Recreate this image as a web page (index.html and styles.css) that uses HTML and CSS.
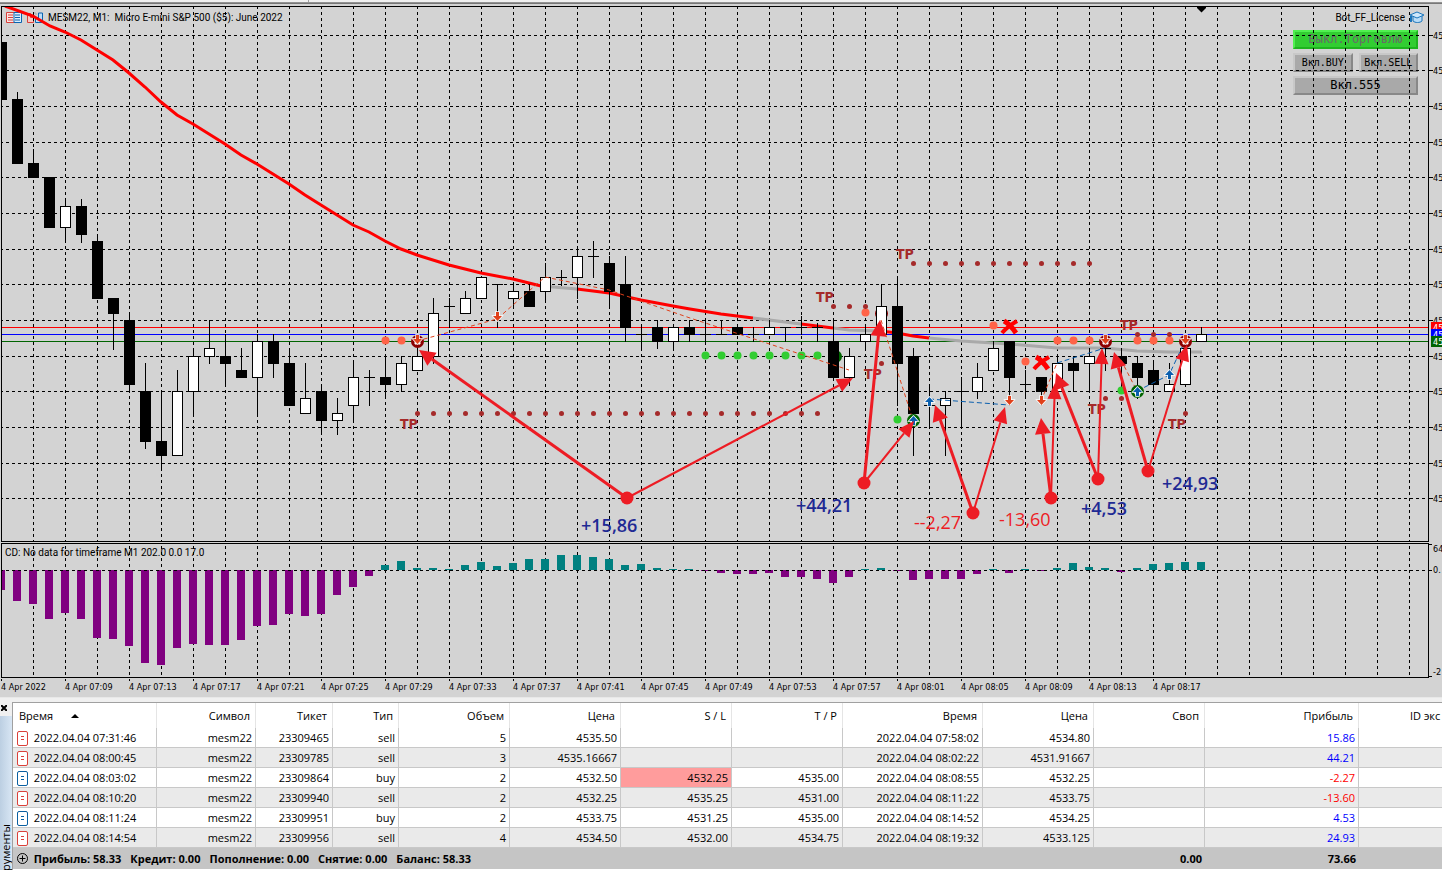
FILE: index.html
```
<!DOCTYPE html>
<html lang="ru">
<head>
  <meta charset="UTF-8">
  <title>MESM22, M1</title>
  <meta name="viewport" content="width=device-width, initial-scale=1">
  <link rel="stylesheet" href="styles.css">
</head>
<body>
  <div class="top-strip"></div>

  <main class="chart">
    <section class="plot" id="price-plot">
      <div class="chart-title">
        <svg width="16" height="12" viewBox="0 0 16 12">
          <path d="M8 .5H.5v10H8" fill="#fde4e2" stroke="#d9403a"/>
          <path d="M8 .5h7.5v10H8z" fill="#dbeefc" stroke="#0a63b0"/>
          <path d="M2 3h5M2 5.500h5M2 8h5" stroke="#d9403a"/>
          <path d="M9 3h5M9 5.500h5M9 8h5" stroke="#0a63b0"/>
        </svg>
        <svg width="16" height="12" viewBox="0 0 16 12">
          <path d="M.5 1.500h3v4h3v5h-6z" fill="#f7c9c5" stroke="#d9403a"/>
          <path d="M15.500 1h-4v5h-3v4.500h7z" fill="#b9dcf7" stroke="#0a63b0"/>
          <path d="M6 1h3v2" fill="none" stroke="#aaa"/>
        </svg>
        <span>MESM22, M1:&nbsp; Micro E-mini S&amp;P 500 ($5): June 2022</span>
      </div>
      <div class="expert">
        <span>Bot_FF_License</span>
        <svg width="16" height="13" viewBox="0 0 16 13">
          <path d="M4 5v5c2 2 7 2 9 0V5" fill="#b9dcf7" stroke="#1b75bb"/>
          <path d="M1 4l7-3 7 3-7 3z" fill="#cfe8fb" stroke="#1b75bb"/>
          <path d="M2 5v6" stroke="#1b75bb" stroke-width="2"/>
        </svg>
      </div>
      <div class="bot-panel">
        <button class="bot-btn on">Выкл.Торговлю</button>
        <button class="bot-btn small">Вкл.BUY</button>
        <button class="bot-btn small">Вкл.SELL</button>
        <button class="bot-btn wide">Вкл.555</button>
      </div>
      <svg class="canvas" id="price-canvas"></svg>
    </section>
    <svg class="scale" id="price-scale"></svg>

    <section class="plot" id="cd-plot">
      <div class="cd-title">CD: No data for timeframe M1 202.0 0.0 17.0</div>
      <svg class="canvas" id="cd-canvas"></svg>
    </section>
    <svg class="scale" id="cd-scale"></svg>

    <div class="time-axis" id="time-axis"></div>
  </main>

  <section class="toolbox">
    <aside class="side">
      <button class="close" aria-label="Закрыть"><svg width="6" height="6" viewBox="0 0 6 6"><path d="M0 0l6 6M6 0L0 6" stroke="#000" stroke-width="2"/></svg></button>
      <div class="side-tab"><span>Инструменты</span></div>
    </aside>
    <div class="table-wrap">
      <table>
        <colgroup>
          <col class="c-time"><col class="c-symbol"><col class="c-ticket"><col class="c-type">
          <col class="c-num"><col class="c-num"><col class="c-num"><col class="c-num">
          <col class="c-close"><col class="c-num"><col class="c-num"><col class="c-profit"><col>
        </colgroup>
        <thead>
          <tr>
            <th class="first">Время <i class="sort"></i></th><th>Символ</th><th>Тикет</th><th>Тип</th>
            <th>Объем</th><th>Цена</th><th>S / L</th><th>T / P</th><th>Время</th><th>Цена</th>
            <th>Своп</th><th>Прибыль</th><th class="last">ID экс</th>
          </tr>
        </thead>
        <tbody id="deals"></tbody>
        <tfoot>
          <tr>
            <td colspan="10" class="first">
              <svg width="11" height="11" viewBox="0 0 11 11"><circle cx="5.500" cy="5.500" r="5" fill="none" stroke="#000"/><path d="M5.500 2.500v6M2.500 5.500h6" stroke="#000"/></svg>
              <span>Прибыль: 58.33</span><span>Кредит: 0.00</span><span>Пополнение: 0.00</span><span>Снятие: 0.00</span><span>Баланс: 58.33</span>
            </td>
            <td>0.00</td><td>73.66</td><td></td>
          </tr>
        </tfoot>
      </table>
    </div>
  </section>

  <script src="chart.js"></script>
</body>
</html>
```
FILE: styles.css
```
* {
  box-sizing: border-box;
}

body {
  margin: 0;
  height: 100vh;
  display: flex;
  flex-direction: column;
  overflow: hidden;
  background: #f0f0f0;
  color: #000;
  font-family: "Open Sans", "Noto Sans", sans-serif;
  font-size: 11px;
}

.top-strip {
  flex: none;
  height: 6px;
  background: linear-gradient(#f0f0f0 2px, #a0a0a0 2px, #696969 4px, #d3d3d3 4px);
}

.top-strip::before {
  content: "";
  display: block;
  width: 308px;
  height: 2px;
  border-right: 1px solid #a0a0a0;
}

/* chart window */
.chart {
  flex: none;
  display: grid;
  grid-template-columns: 1fr 13px;
  grid-template-rows: 536px 135px 18px;
  row-gap: 1px;
  padding-left: 1px;
  background: #d3d3d3;
  border-bottom: 1px solid #e8e8e8;
  font-family: "DejaVu Sans Condensed", "DejaVu Sans", sans-serif;
  font-size: 9px;
}

.plot {
  position: relative;
  min-width: 0;
  overflow: hidden;
  border: 1px solid #000;
}

.canvas {
  position: absolute;
  top: 0;
  left: 0;
  width: 100%;
  height: 100%;
  pointer-events: none;
}

.scale {
  width: 100%;
  height: 100%;
}

.chart-title,
.expert,
.cd-title {
  font-family: Roboto, sans-serif;
  font-size: 10px;
}

.chart-title {
  display: flex;
  align-items: center;
  gap: 5px;
  height: 21px;
  padding-left: 4px;
  white-space: nowrap;
}

.expert {
  position: absolute;
  top: 0;
  right: 3px;
  display: flex;
  align-items: center;
  gap: 4px;
  height: 21px;
}

.cd-title {
  padding-left: 3px;
  line-height: 18px;
}

.bot-panel {
  position: absolute;
  top: 23px;
  right: 10px;
  width: 125px;
  display: grid;
  grid-template-columns: 1fr 1fr;
  gap: 4px 6px;
}

.bot-btn {
  height: 19px;
  padding: 0;
  border: 2px solid;
  border-color: #c8c8c8 #888 #888 #c8c8c8;
  background: #a9a9a9;
  color: #000;
  font: 12px/15px "DejaVu Sans Mono", monospace;
}

.bot-btn.on {
  grid-column: span 2;
  background: #32cd32;
  border-color: #50f050 #1eb41e #1eb41e #50f050;
  color: #696969;
}

.bot-btn.wide {
  grid-column: span 2;
}

.bot-btn.small {
  font-size: 10px;
}

.time-axis {
  grid-column: span 2;
  display: flex;
  overflow: hidden;
  line-height: 13px;
}

.time-axis span {
  flex: none;
  width: 64px;
  white-space: nowrap;
}

.time-axis span::before {
  content: "";
  display: block;
  width: 1px;
  height: 2px;
  background: #000;
}

.tp {
  font: bold 14px "DejaVu Sans Condensed", sans-serif;
  fill: #a52a2a;
}

.result {
  font: 600 18px "Open Sans", sans-serif;
  fill: #1f2a94;
}

.result.loss {
  fill: #ed1c24;
  font-weight: 500;
}

/* history table */
.toolbox {
  flex: 1;
  min-height: 0;
  display: flex;
  padding-top: 4px;
}

.side {
  flex: none;
  width: 12px;
  display: flex;
  flex-direction: column;
}

.close {
  display: flex;
  height: 14px;
  padding: 3px 0 0 1px;
  border: 0;
  background: none;
}

.side-tab {
  flex: 1;
  min-height: 0;
  overflow: hidden;
  padding-top: 108px;
  background: linear-gradient(90deg, #bccfe2, #d8e6f4);
}

.side-tab span {
  display: block;
  writing-mode: vertical-rl;
  transform: rotate(180deg);
  line-height: 12px;
}

.table-wrap {
  flex: 1;
  min-width: 0;
  overflow: hidden;
  background: #fff;
  border-top: 1px solid #a0a0a0;
  border-left: 1px solid #a0a0a0;
}

table {
  width: 100%;
  table-layout: fixed;
  border-collapse: separate;
  border-spacing: 0;
}

.c-time { width: 144px; }
.c-symbol { width: 99px; }
.c-ticket { width: 77px; }
.c-type { width: 66px; }
.c-num { width: 111px; }
.c-close { width: 140px; }
.c-profit { width: 154px; }

th, td {
  padding: 0 3px 0 0;
  text-align: right;
  white-space: nowrap;
  border-right: 1px solid #c8c8c8;
}

th {
  height: 25px;
  padding-right: 5px;
  font-weight: 400;
  border-color: #e5e5e5;
}

th.first {
  padding-left: 6px;
  text-align: left;
}

th.last {
  padding: 0 0 0 51px;
  text-align: left;
  border-right: 0;
}

.sort {
  display: inline-block;
  margin-left: 15px;
  border: 4px solid transparent;
  border-top: 0;
  border-bottom: 4px solid #000;
  vertical-align: 2px;
}

td {
  height: 20px;
  line-height: 18px;
  border-bottom: 1px solid #c8c8c8;
}

td:last-child {
  border-right: 0;
}

tbody tr:nth-child(even) {
  background: #eaeaea;
}

.first {
  text-align: left;
}

td .doc {
  margin: 0 3px 0 4px;
  vertical-align: middle;
}

td.hit {
  background: #ff9c9c;
}

td.profit {
  color: #00f;
}

td.loss {
  color: #f00;
}

tfoot td {
  height: 21px;
  border: 0;
  background: #c5c5c5;
  font-weight: 700;
}

tfoot svg {
  margin: 0 3px 0 4px;
  vertical-align: -1px;
}

tfoot span {
  margin-right: 9px;
}
```
FILE: chart.js
```
const SVG = 'http://www.w3.org/2000/svg';
const STEP = 16;
const barX = i => 1 + i * STEP;

// [high, top, bottom, low, type]: b - bear, w - bull, d - doji
const candles = [
  [42, 42, 99, 99, 'b'], [92, 99, 163, 163, 'b'], [149, 163, 177, 177, 'b'], [177, 177, 227, 227, 'b'],
  [199, 206, 227, 242, 'w'], [199, 206, 234, 242, 'b'], [234, 241, 298, 298, 'b'], [298, 298, 313, 349, 'b'],
  [312, 320, 384, 391, 'b'], [363, 391, 441, 448, 'b'], [391, 441, 455, 470, 'b'], [370, 391, 455, 455, 'w'],
  [348, 356, 391, 416, 'w'], [320, 348, 356, 363, 'w'], [334, 356, 363, 386, 'b'], [348, 370, 377, 377, 'b'],
  [334, 341, 377, 416, 'w'], [334, 341, 363, 377, 'b'], [348, 363, 405, 405, 'b'], [363, 398, 413, 413, 'w'],
  [384, 391, 420, 434, 'b'], [398, 413, 420, 434, 'w'], [360, 377, 405, 420, 'w'], [370, 377, 377, 405, 'd'],
  [354, 377, 384, 398, 'b'], [356, 363, 384, 391, 'w'], [341, 356, 370, 370, 'w'], [298, 313, 356, 363, 'w'],
  [298, 306, 306, 327, 'd'], [291, 298, 313, 313, 'w'], [277, 277, 298, 298, 'w'], [284, 284, 284, 327, 'd'],
  [284, 291, 298, 308, 'w'], [284, 291, 306, 306, 'b'], [263, 277, 291, 299, 'w'], [270, 277, 277, 285, 'd'],
  [247, 256, 277, 298, 'w'], [241, 256, 256, 277, 'd'], [256, 263, 291, 308, 'b'], [256, 284, 327, 341, 'b'],
  [324, 334, 334, 350, 'd'], [320, 327, 341, 348, 'b'], [327, 327, 341, 350, 'w'], [320, 327, 334, 341, 'b'],
  [320, 334, 334, 341, 'd'], [320, 334, 334, 334, 'd'], [327, 327, 334, 334, 'b'], [327, 334, 334, 341, 'd'],
  [320, 327, 334, 334, 'w'], [327, 327, 327, 341, 'd'], [316, 327, 327, 334, 'd'], [323, 327, 327, 341, 'd'],
  [320, 341, 377, 377, 'b'], [348, 356, 377, 385, 'w'], [327, 334, 341, 349, 'w'], [284, 306, 334, 334, 'w'],
  [277, 306, 363, 405, 'b'], [348, 356, 413, 455, 'b'], [384, 405, 405, 427, 'd'], [391, 398, 405, 455, 'w'],
  [377, 391, 391, 427, 'd'], [363, 377, 391, 398, 'w'], [341, 348, 370, 370, 'w'], [341, 341, 377, 405, 'b'],
  [370, 384, 384, 398, 'd'], [377, 377, 391, 405, 'b'], [356, 363, 391, 391, 'w'], [356, 363, 370, 391, 'b'],
  [348, 356, 363, 391, 'w'], [341, 348, 348, 370, 'd'], [348, 356, 363, 384, 'b'], [356, 363, 377, 398, 'b'],
  [363, 370, 384, 391, 'b'], [363, 384, 391, 391, 'w'], [341, 348, 384, 384, 'w'], [327, 334, 341, 341, 'w']
];

// cumulative delta: height below (-) or above (+) the zero line
const delta = [
  -20, -31, -34, -49, -43, -49, -68, -69, -76, -93, -95, -78, -74, -75, -75, -70, -56, -55, -44, -46,
  -44, -25, -17, -6, 5, 9, 2, 2, 1, 5, 8, 4, 7, 11, 11, 15, 15, 13, 11, 5, 6, 2, 1, 1, -1, -3, -4, -4,
  -3, -7, -7, -9, -13, -7, 1, 2, -1, -10, -9, -9, -9, -4, 1, -3, 1, -1, 2, 7, 3, 2, -2, 2, 6, 7, 8, 8
];

const gridRows = [35, 70, 106, 142, 177, 213, 249, 284, 320, 356, 391, 427, 463, 498];

function add(parent, tag, attrs, text) {
  const el = document.createElementNS(SVG, tag);
  for (const key in attrs) el.setAttribute(key, attrs[key]);
  if (text) el.textContent = text;
  parent.appendChild(el);
  return el;
}

function rect(g, x, y, width, height, fill) {
  return add(g, 'rect', { x, y, width, height, fill });
}

function path(g, d, stroke, width, dash) {
  return add(g, 'path', { d, stroke, fill: 'none', 'stroke-width': width, 'stroke-dasharray': dash || 'none' });
}

function verticals(g, width, top, bottom) {
  for (let x = 33.5; x < width; x += 32) path(g, `M${x} ${top}V${bottom}`, '#000', 1, '3 3');
}

function drawCandle(g, c, i) {
  const x = barX(i);
  const [high, top, bottom, low, type] = c;
  rect(g, x, high, 1, low - high + 1, '#000');
  rect(g, x - 5, top, 11, bottom - top + 1, '#000');
  if (type === 'w') rect(g, x - 4, top + 1, 9, bottom - top - 1, '#fff');
}

function drawDots(g, from, to, y, r, fill) {
  for (let x = from; x <= to; x += STEP) add(g, 'circle', { cx: x + 0.5, cy: y + 0.5, r, fill });
}

function drawRing(g, x, y, color) {
  add(g, 'circle', { cx: x + 0.5, cy: y + 0.5, r: 5, fill: '#fff', stroke: color, 'stroke-width': 3 });
  path(g, `M${x + 0.5} ${y - 5}v11M${x - 4} ${y + 0.5}h9`, color, 2);
}

function drawDeal(g, x, y, dir) {
  const s = dir === 'up' ? -1 : 1;
  const color = dir === 'up' ? '#0a5fae' : '#e0401a';
  add(g, 'path', {
    d: `M${x + 0.5} ${y + 5 * s}l-4.500 ${-5 * s}h3v${-4 * s}h3v${4 * s}h3z`,
    fill: color, stroke: '#fff', 'stroke-width': 1.5, 'paint-order': 'stroke'
  });
}

function drawCross(g, x, y) {
  path(g, `M${x - 6} ${y - 6}q6 3 12 12`, '#f00', 5);
  path(g, `M${x - 8} ${y + 6}q5 -6 15 -12`, '#f00', 4);
}

function drawArrow(g, x1, y1, x2, y2, width) {
  const len = Math.hypot(x2 - x1, y2 - y1);
  const ux = (x2 - x1) / len;
  const uy = (y2 - y1) / len;
  const bx = x2 - ux * 16;
  const by = y2 - uy * 16;
  const half = width === 3 ? 8 : 7;
  path(g, `M${x1} ${y1}L${bx} ${by}`, '#ed1c24', width);
  add(g, 'path', {
    d: `M${x2} ${y2}L${bx - uy * half} ${by + ux * half}L${bx + uy * half} ${by - ux * half}z`,
    fill: '#ed1c24'
  });
}

function drawPrice() {
  const svg = document.getElementById('price-canvas');
  const width = svg.clientWidth + 2;
  const g = add(svg, 'g', { transform: 'translate(-2 -7)' });

  verticals(g, width, 6, 541);
  gridRows.forEach(y => path(g, `M0 ${y + 0.5}H${width}`, '#000', 1, '3 3'));
  path(g, `M0 327.500H${width}`, '#f00', 1);
  path(g, `M0 334.500H${width}`, '#00f', 1);
  path(g, `M0 341.500H${width}`, '#006400', 1);

  // markers hidden behind the candles
  drawRing(g, 881, 313, '#8b0000');
  drawRing(g, 835, 356, '#006400');
  drawDots(g, 705, 817, 355, 4, '#32cd32');
  drawDots(g, 865, 865, 312, 4, '#ff6347');

  // moving average
  const red = '#f00', gray = '#a9a9a9';
  path(g, 'M5 6L33 16L50 26L65 32L81 40L97 50L113 60L129 73L145 87L161 102L177 115L193 124L209 134L225 144L241 155L257 164L273 174L289 184L305 195L321 205L337 215L353 225L369 232L385 241L401 249L417 255L449 265L481 273L513 279L541 286', red, 3);
  path(g, 'M541 286L577 289', gray, 3);
  path(g, 'M577 289L609 293L641 300L673 306L690 309L721 314L753 318', red, 3);
  path(g, 'M753 318L801 324', gray, 3);
  path(g, 'M801 324L833 328', red, 3);
  path(g, 'M833 328L849 330L881 331', gray, 3);
  path(g, 'M881 331L897 333L913 336L929 338', red, 3);
  path(g, 'M929 338L961 341L1009 344L1057 348L1105 348L1137 351L1169 352L1202 352', gray, 3);

  candles.forEach((c, i) => drawCandle(g, c, i));

  // trade lines
  path(g, 'M417 341L497 319L545 277L609 290L690 318L849 370M881 320L913 420M1041 401L1057 363M1121 360L1137 391', '#e0401a', 1, '4 3');
  path(g, 'M929 399L1009 405M1057 363L1105 348M1137 391L1169 375L1185 341', '#0a5fae', 1, '5 3');

  drawDots(g, 385, 401, 340, 4, '#ff6347');
  drawDots(g, 993, 993, 325, 4, '#ff6347');
  drawDots(g, 1025, 1025, 361, 4, '#ff6347');
  drawDots(g, 1057, 1089, 340, 4, '#ff6347');
  drawDots(g, 1137, 1169, 340, 4, '#ff6347');
  drawDots(g, 897, 897, 419, 4, '#32cd32');
  drawDots(g, 1121, 1121, 390, 4, '#32cd32');

  drawDots(g, 417, 817, 413, 2.5, '#a52a2a');
  drawDots(g, 833, 865, 306, 2.5, '#a52a2a');
  drawDots(g, 881, 881, 363, 2.5, '#a52a2a');
  drawDots(g, 913, 1089, 263, 2.5, '#a52a2a');
  drawDots(g, 1105, 1121, 398, 2.5, '#a52a2a');
  drawDots(g, 1137, 1169, 334, 2.5, '#a52a2a');
  drawDots(g, 1185, 1185, 413, 2.5, '#a52a2a');

  [[400, 429], [816, 302], [896, 259], [864, 379], [1088, 414], [1120, 330], [1168, 429]]
    .forEach(([x, y]) => add(g, 'text', { x, y, class: 'tp' }, 'TP'));

  [[417, 341], [1105, 341], [1185, 341]].forEach(([x, y]) => {
    drawRing(g, x, y, '#8b0000');
    drawDeal(g, x, y - 2, 'down');
  });
  [[913, 420], [1137, 391]].forEach(([x, y]) => {
    drawRing(g, x, y, '#006400');
    drawDeal(g, x, y + 1, 'up');
  });
  drawDeal(g, 497, 316, 'down');
  drawDeal(g, 1009, 400, 'down');
  drawDeal(g, 1041, 400, 'down');
  drawDeal(g, 929, 402, 'up');
  drawDeal(g, 1169, 375, 'up');

  drawCross(g, 1010, 327);
  drawCross(g, 1042, 363);

  // deal callouts: pivot, thick arrow to the entry, thin arrow to the exit
  [
    [627, 498, 419, 350, 853, 378],
    [864, 483, 880, 320, 914, 421],
    [973, 513, 935, 405, 1005, 407],
    [1051, 498, 1041, 418, 1055, 383],
    [1098, 479, 1056, 373, 1102, 348],
    [1148, 471, 1114, 352, 1187, 345]
  ].forEach(([x, y, ax, ay, bx, by]) => {
    drawArrow(g, x, y, bx, by, 2);
    drawArrow(g, x, y, ax, ay, 3);
    add(g, 'circle', { cx: x, cy: y, r: 6.5, fill: '#ed1c24' });
  });

  [
    [581, 532, '+15,86'], [796, 512, '+44,21'], [914, 529, '--2,27'],
    [999, 526, '-13,60'], [1081, 515, '+4,53'], [1162, 490, '+24,93']
  ].forEach(([x, y, t]) => add(g, 'text', { x, y, class: t[0] === '-' ? 'result loss' : 'result' }, t));

  add(g, 'path', { d: 'M1197 7h9v1l-4.500 4.500l-4.500 -4.500z', fill: '#000' });
}

function drawPriceScale() {
  const g = add(document.getElementById('price-scale'), 'g', { transform: 'translate(0 -6)' });
  gridRows.forEach(y => {
    rect(g, 0, y, 4, 1, '#000');
    add(g, 'text', { x: 4, y: y + 4 }, '45');
  });
  [[322, '#f00'], [329, '#00f'], [336, '#006400']].forEach(([y, fill]) => {
    rect(g, 2, y, 12, 11, fill);
    add(g, 'text', { x: 4, y: y + 9, fill: '#fff' }, '45');
  });
}

function drawDelta() {
  const svg = document.getElementById('cd-canvas');
  const width = svg.clientWidth + 2;
  const g = add(svg, 'g', { transform: 'translate(-2 -544)' });
  verticals(g, width, 546, 677);
  delta.forEach((v, i) => {
    const x = barX(i) - 4;
    if (v < 0) rect(g, x, 570, 8, -v, '#800080');
    else rect(g, x, 570 - v, 8, v, '#008080');
  });
  path(g, `M0 570.500H${width}`, '#000', 1, '3 3');

  const s = add(document.getElementById('cd-scale'), 'g', { transform: 'translate(0 -543)' });
  [[544, 552, '64'], [570, 573, '0.'], [676, 675, '-2']].forEach(([tick, y, t]) => {
    rect(s, 0, tick, 3, 1, '#000');
    add(s, 'text', { x: 4, y }, t);
  });
}

function drawTimeAxis() {
  const axis = document.getElementById('time-axis');
  let html = '<span>4 Apr 2022</span>';
  for (let m = 7 * 60 + 9; m <= 8 * 60 + 17; m += 4) {
    const mm = String(m % 60).padStart(2, '0');
    html += `<span>4 Apr 0${Math.floor(m / 60)}:${mm}</span>`;
  }
  axis.innerHTML = html;
}

const deals = [
  ['07:31:46', '23309465', 'sell', 5, '4535.50', '', '', '07:58:02', '4534.80', '15.86'],
  ['08:00:45', '23309785', 'sell', 3, '4535.16667', '', '', '08:02:22', '4531.91667', '44.21'],
  ['08:03:02', '23309864', 'buy', 2, '4532.50', '4532.25', '4535.00', '08:08:55', '4532.25', '-2.27'],
  ['08:10:20', '23309940', 'sell', 2, '4532.25', '4535.25', '4531.00', '08:11:22', '4533.75', '-13.60'],
  ['08:11:24', '23309951', 'buy', 2, '4533.75', '4531.25', '4535.00', '08:14:52', '4534.25', '4.53'],
  ['08:14:54', '23309956', 'sell', 4, '4534.50', '4532.00', '4534.75', '08:19:32', '4533.125', '24.93']
];

function fillDeals() {
  document.getElementById('deals').innerHTML = deals.map(([open, ticket, type, vol, price, sl, tp, close, closePrice, profit]) => {
    const color = type === 'sell' ? '#d9403a' : '#0a5fa0';
    const hit = sl && sl === closePrice ? ' class="hit"' : '';
    return `
      <tr>
        <td class="first"><svg class="doc" width="11" height="15" viewBox="0 0 11 15"><rect x=".5" y=".5" width="10" height="14" rx="1.500" fill="#fff" stroke="${color}"/><path d="M4 5.500h3M4 8.500h3" stroke="${color}"/></svg>
          2022.04.04 ${open}</td>
        <td>mesm22</td><td>${ticket}</td><td>${type}</td><td>${vol}</td><td>${price}</td>
        <td${hit}>${sl}</td><td>${tp}</td><td>2022.04.04 ${close}</td><td>${closePrice}</td>
        <td></td><td class="${profit < 0 ? 'loss' : 'profit'}">${profit}</td><td></td>
      </tr>`;
  }).join('');
}

drawPrice();
drawPriceScale();
drawDelta();
drawTimeAxis();
fillDeals();
```
